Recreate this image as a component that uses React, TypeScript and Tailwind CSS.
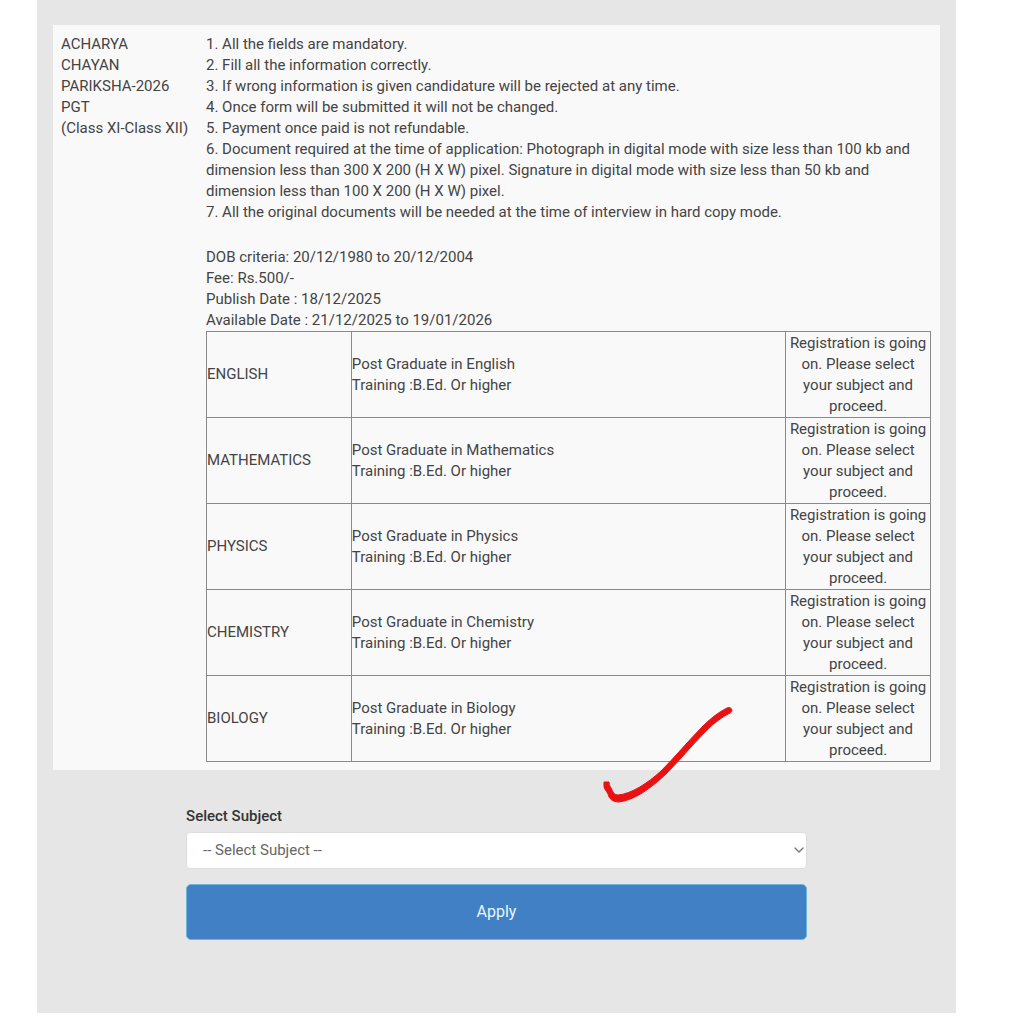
import { useState } from 'react'
import { ChevronDown } from 'lucide-react'

const instructions = [
  'All the fields are mandatory.',
  'Fill all the information correctly.',
  'If wrong information is given candidature will be rejected at any time.',
  'Once form will be submitted it will not be changed.',
  'Payment once paid is not refundable.',
  'Document required at the time of application: Photograph in digital mode with size less than 100 kb and dimension less than 300 X 200 (H X W) pixel. Signature in digital mode with size less than 50 kb and dimension less than 100 X 200 (H X W) pixel.',
  'All the original documents will be needed at the time of interview in hard copy mode.',
]

const subjects = ['English', 'Mathematics', 'Physics', 'Chemistry', 'Biology']

function SubjectTable() {
  return (
    <table className="w-full table-fixed border-collapse border border-[#8a8a8a]">
      <colgroup>
        <col className="w-1/5" />
        <col className="w-3/5" />
        <col className="w-1/5" />
      </colgroup>
      <tbody>
        {subjects.map((subject) => (
          <tr key={subject} className="h-[86px]">
            <td className="border border-[#8a8a8a] uppercase">{subject}</td>
            <td className="border border-[#8a8a8a]">
              {`Post Graduate in ${subject}`}
              <br />
              Training :B.Ed. Or higher
            </td>
            <td className="border border-[#8a8a8a] px-px text-center">
              Registration is going on. Please select your subject and proceed.
            </td>
          </tr>
        ))}
      </tbody>
    </table>
  )
}

function TickMark() {
  return (
    <svg
      className="pointer-events-none absolute -bottom-[34px] right-[205px] h-[100px] w-[135px]"
      viewBox="600 704 135 100"
      fill="#e81212"
      stroke="#e81212"
      strokeLinejoin="round"
      aria-hidden="true"
    >
      <path d="M604 782 L609 782 C609 786 611 787 612 790 C613 793 615 795 618 795 C631 794 648 783 661 771 C675 757 689 740 703 726 C711 718 719 712 727 708 C731 706 734 711 730 713 C722 717 714 723 707 730 C693 744 680 760 666 774 C651 788 635 800 619 802 C613 802 609 799 608 794 C606 790 604 789 604 786 Z" />
    </svg>
  )
}

export default function App() {
  const [subject, setSubject] = useState('')

  return (
    <div className="bg-white pb-[11px] pl-[37px] pr-[61px] font-[Roboto,sans-serif] text-[15px] leading-[21px] text-[#444444]">
      <main className="bg-[#e6e6e6] px-4 pb-[73px] pt-[25px]">
        <section className="relative flex bg-[#f9f9f9] pb-2 pl-2 pr-[9px] pt-[9px]">
          <h1 className="w-1/6 shrink-0">
            ACHARYA
            <br />
            CHAYAN
            <br />
            PARIKSHA-2026
            <br />
            PGT
            <br />
            <span className="whitespace-nowrap">(Class XI-Class XII)</span>
          </h1>
          <div className="min-w-0 flex-1">
            <ol className="mb-6">
              {instructions.map((text, i) => (
                <li key={text}>{`${i + 1}. ${text}`}</li>
              ))}
            </ol>
            <p>DOB criteria: 20/12/1980 to 20/12/2004</p>
            <p>Fee: Rs.500/-</p>
            <p>Publish Date : 18/12/2025</p>
            <p>Available Date : 21/12/2025 to 19/01/2026</p>
            <SubjectTable />
          </div>
          <TickMark />
        </section>

        <form className="mx-auto mt-9 w-[70%]" onSubmit={(e) => e.preventDefault()}>
          <label htmlFor="subject" className="block font-medium text-[#333333]">
            Select Subject
          </label>
          <div className="relative mt-[5px]">
            <select
              id="subject"
              value={subject}
              onChange={(e) => setSubject(e.target.value)}
              className="h-[37px] w-full appearance-none rounded border border-[#dddddd] bg-white px-4 text-[#666666]"
            >
              <option value="">-- Select Subject --</option>
              {subjects.map((s) => (
                <option key={s} value={s}>
                  {s}
                </option>
              ))}
            </select>
            <ChevronDown
              className="pointer-events-none absolute right-0 top-[10px] h-4 w-4 text-[#777777]"
              strokeWidth={2}
            />
          </div>
          <button
            type="submit"
            className="mt-[15px] h-14 w-full rounded-[5px] border border-[#6bb5d8] bg-[#4180c5] text-base text-[#e8f7ff]"
          >
            Apply
          </button>
        </form>
      </main>
    </div>
  )
}
